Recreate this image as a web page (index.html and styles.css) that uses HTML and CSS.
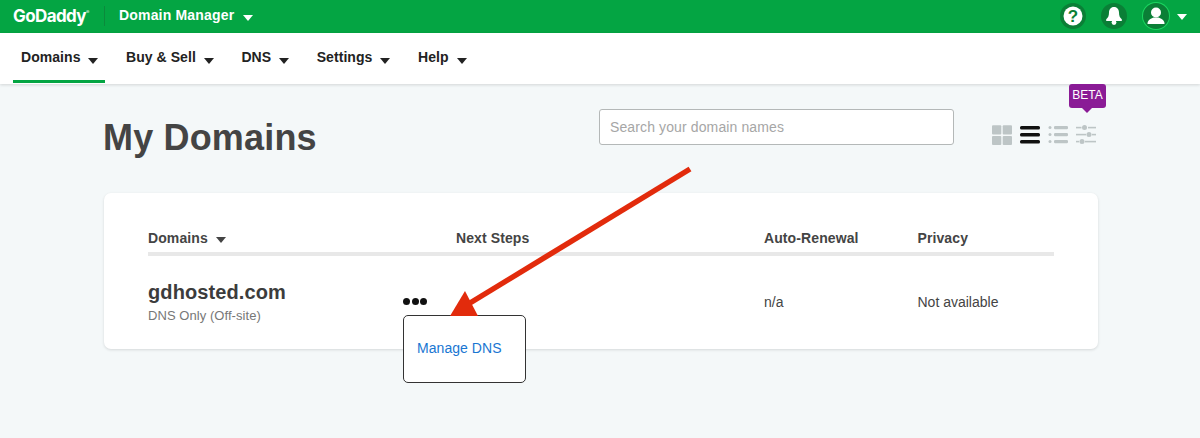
FILE: index.html
```html
<!DOCTYPE html>
<html lang="en">
<head>
<meta charset="utf-8">
<title>My Domains</title>
<link rel="stylesheet" href="styles.css">
</head>
<body>
<header class="topbar">
  <div class="brand">GoDaddy<sup class="reg">®</sup></div>
  <div class="divider"></div>
  <div class="product">Domain Manager<span class="caret white"></span></div>
  <div class="top-icons">
    <span class="round">
      <svg viewBox="0 0 26 26" width="26" height="26"><circle cx="13" cy="13" r="9.500" fill="#fff"/><text x="13" y="19" text-anchor="middle" class="qmark">?</text></svg>
    </span>
    <span class="round">
      <svg viewBox="0 0 26 26" width="26" height="26"><path d="M13 4c-3.300 0-5 2.500-5 5.500 0 3.600-1 5.300-2.800 6.800v1.700h15.600v-1.700c-1.800-1.500-2.800-3.200-2.800-6.800 0-3-1.700-5.500-5-5.500z" fill="#fff"/><circle cx="13" cy="19.500" r="2.400" fill="#fff"/></svg>
    </span>
    <span class="round avatar">
      <svg viewBox="0 0 26 26" width="26" height="26"><circle cx="13" cy="9.500" r="5" fill="#fff"/><path d="M4.500 21c0-4 3-5.500 6-6.500h5c3 1 6 2.500 6 6.500z" fill="#fff"/></svg>
    </span>
    <span class="caret white small"></span>
  </div>
</header>
<nav class="subnav">
  <a class="tab active">Domains<span class="caret"></span></a>
  <a class="tab">Buy &amp; Sell<span class="caret"></span></a>
  <a class="tab">DNS<span class="caret"></span></a>
  <a class="tab">Settings<span class="caret"></span></a>
  <a class="tab">Help<span class="caret"></span></a>
</nav>
<main class="page">
  <div class="title-row">
    <h1>My Domains</h1>
    <div class="search">Search your domain names</div>
    <div class="views">
      <svg viewBox="0 0 20 20" width="20" height="20"><rect width="9.300" height="9.300" y="0.300" rx="1" fill="#bdc5c6"/><rect x="10.700" y="0.300" width="9.300" height="9.300" rx="1" fill="#bdc5c6"/><rect y="11" width="9.300" height="9" rx="1" fill="#bdc5c6"/><rect x="10.700" y="11" width="9.300" height="9" rx="1" fill="#bdc5c6"/></svg>
      <svg viewBox="0 0 20 20" width="20" height="20"><rect y="1" width="20" height="3.600" rx="1.500" fill="#111"/><rect y="8" width="20" height="3.600" rx="1.500" fill="#111"/><rect y="15" width="20" height="3.600" rx="1.500" fill="#111"/></svg>
      <svg viewBox="0 0 20 20" width="20" height="20"><g fill="#bdc5c6"><circle cx="2" cy="2.500" r="1.500"/><circle cx="2" cy="9.500" r="1.500"/><circle cx="2" cy="16.500" r="1.500"/><rect x="6" y="1" width="14" height="3.200" rx="1.200"/><rect x="6" y="8" width="14" height="3.200" rx="1.200"/><rect x="6" y="15" width="14" height="3.200" rx="1.200"/></g></svg>
      <svg viewBox="0 0 20 20" width="20" height="20"><g fill="#bdc5c6"><rect y="1.800" width="5.500" height="1.600"/><rect x="12" y="1.800" width="8" height="1.600"/><rect y="8.800" width="10" height="1.600"/><rect x="16" y="8.800" width="4" height="1.600"/><rect y="15.800" width="3" height="1.600"/><rect x="9" y="15.800" width="11" height="1.600"/><circle cx="8.500" cy="2.600" r="2.500"/><circle cx="13" cy="9.600" r="2.500"/><circle cx="6" cy="16.600" r="2.500"/></g></svg>
      <span class="beta">BETA</span>
    </div>
  </div>
  <section class="card">
    <div class="row head">
      <div class="c1">Domains<span class="caret dark"></span></div>
      <div class="c2">Next Steps</div>
      <div class="c3">Auto-Renewal</div>
      <div class="c4">Privacy</div>
    </div>
    <div class="row body">
      <div class="c1">
        <div class="domain">gdhosted.com</div>
        <div class="sub">DNS Only (Off-site)</div>
      </div>
      <div class="c2"></div>
      <div class="c3 cell">n/a</div>
      <div class="c4 cell">Not available</div>
    </div>
  </section>
  <div class="dots"><i></i><i></i><i></i></div>
  <div class="popup"><a>Manage DNS</a></div>
  <svg class="arrow" viewBox="0 0 1200 438" width="1200" height="438"><path d="M690 169L470 303" stroke="#e22b0c" stroke-width="5.500" fill="none"/><path d="M450 316L465 291L478 316z" fill="#e22b0c"/></svg>
</main>
</body>
</html>
```
FILE: styles.css
```css
* { box-sizing: border-box; }
html, body { margin: 0; height: 438px; overflow: hidden; }
body { background: #f4f8f9; font-family: "Liberation Sans", Arial, sans-serif; color: #444; position: relative; }

.topbar { height: 33px; background: #04a543; display: flex; align-items: center; padding-left: 13px; padding-bottom: 2px; color: #fff; }
.brand { font-family: "Inter", "Liberation Sans", sans-serif; font-weight: 700; font-size: 17px; letter-spacing: -0.6px; width: 81px; }
.reg { font-size: 5px; vertical-align: 8px; line-height: 0; opacity: .8; }
.divider { width: 1px; height: 20px; background: #0b8a3c; margin-left: 10px; }
.product { font-size: 14px; font-weight: 700; margin-left: 14px; letter-spacing: .18px; padding-bottom: 2px; display: flex; align-items: center; }
.caret { display: inline-block; width: 0; height: 0; border-left: 5px solid transparent; border-right: 5px solid transparent; border-top: 6px solid #222; margin-left: 8px; position: relative; top: 2px; }
.caret.white { border-top-color: #fff; margin-left: 9px; top: 3px; }
.top-icons { margin-left: auto; display: flex; align-items: center; gap: 15px; padding-right: 13px; }
.round { width: 26px; height: 26px; border-radius: 50%; background: #0a7f36; display: block; }
.round svg { display: block; }
.avatar { box-shadow: 0 0 0 1px #1bd660; margin-left: 1px; }
.top-icons .small { margin-left: -7px; top: 1px; }
.qmark { font: 700 17px "Liberation Sans", sans-serif; fill: #0a7f36; }

.subnav { height: 51px; background: #fff; display: flex; padding-left: 13px; box-shadow: 0 1px 3px rgba(0,0,0,.14); }
.tab { font-size: 14px; font-weight: 700; color: #222; padding: 16px 8px 0; margin-right: 11.600px; letter-spacing: .05px; height: 50px; white-space: nowrap; }
.tab.active { border-bottom: 3px solid #04a543; padding-right: 7px; margin-right: 12.600px; }

.page { padding: 0 102px 0 104px; }
.title-row { height: 109px; display: flex; position: relative; }
h1 { margin: 0 0 0 -1px; padding-top: 33px; font-size: 36px; font-weight: 700; color: #444; line-height: 42px; letter-spacing: .17px; }
.search { position: absolute; left: 495px; top: 25px; width: 355px; height: 36px; border: 1px solid #b4b8b8; border-radius: 3px; background: #fff; color: #a6a6a6; font-size: 14px; line-height: 34px; padding-left: 10px; letter-spacing: .12px; }
.views { position: absolute; left: 888px; top: 41px; display: flex; gap: 8px; }
.beta { position: absolute; left: 77px; top: -41px; width: 37px; height: 24px; background: #8a1b96; color: #fff; font-size: 12px; line-height: 23px; text-align: center; border-radius: 3px; }
.beta::after { content: ""; position: absolute; left: 13px; bottom: -5px; border-left: 5px solid transparent; border-right: 5px solid transparent; border-top: 5px solid #8a1b96; }

.card { height: 156px; background: #fff; border-radius: 7px; box-shadow: 0 1px 3px rgba(0,0,0,.13); padding: 0 44px; }
.row { display: grid; grid-template-columns: 308px 308px 153.500px 1fr; }
.head { height: 63px; border-bottom: 4px solid #e8e8e8; padding-top: 37px; font-size: 14px; font-weight: 700; color: #444; letter-spacing: .1px; }
.caret.dark { border-top-color: #444; top: 0; }
.body { padding-top: 25px; }
.domain { font-size: 20px; font-weight: 700; color: #3c3c3c; line-height: 23px; letter-spacing: .1px; }
.sub { font-size: 13px; color: #777; margin-top: 4px; letter-spacing: .06px; }
.cell { font-size: 14px; color: #444; padding-top: 13px; }

.dots { position: absolute; left: 403px; top: 298px; display: flex; gap: 1.500px; }
.dots i { width: 7px; height: 7px; border-radius: 50%; background: #111; }
.popup { position: absolute; left: 403px; top: 315px; width: 123px; height: 68px; background: #fff; border: 1px solid #333; border-radius: 5px; padding: 24px 13px; font-size: 14px; letter-spacing: .05px; color: #1976d2; }
.arrow { position: absolute; left: 0; top: 0; pointer-events: none; }
```
